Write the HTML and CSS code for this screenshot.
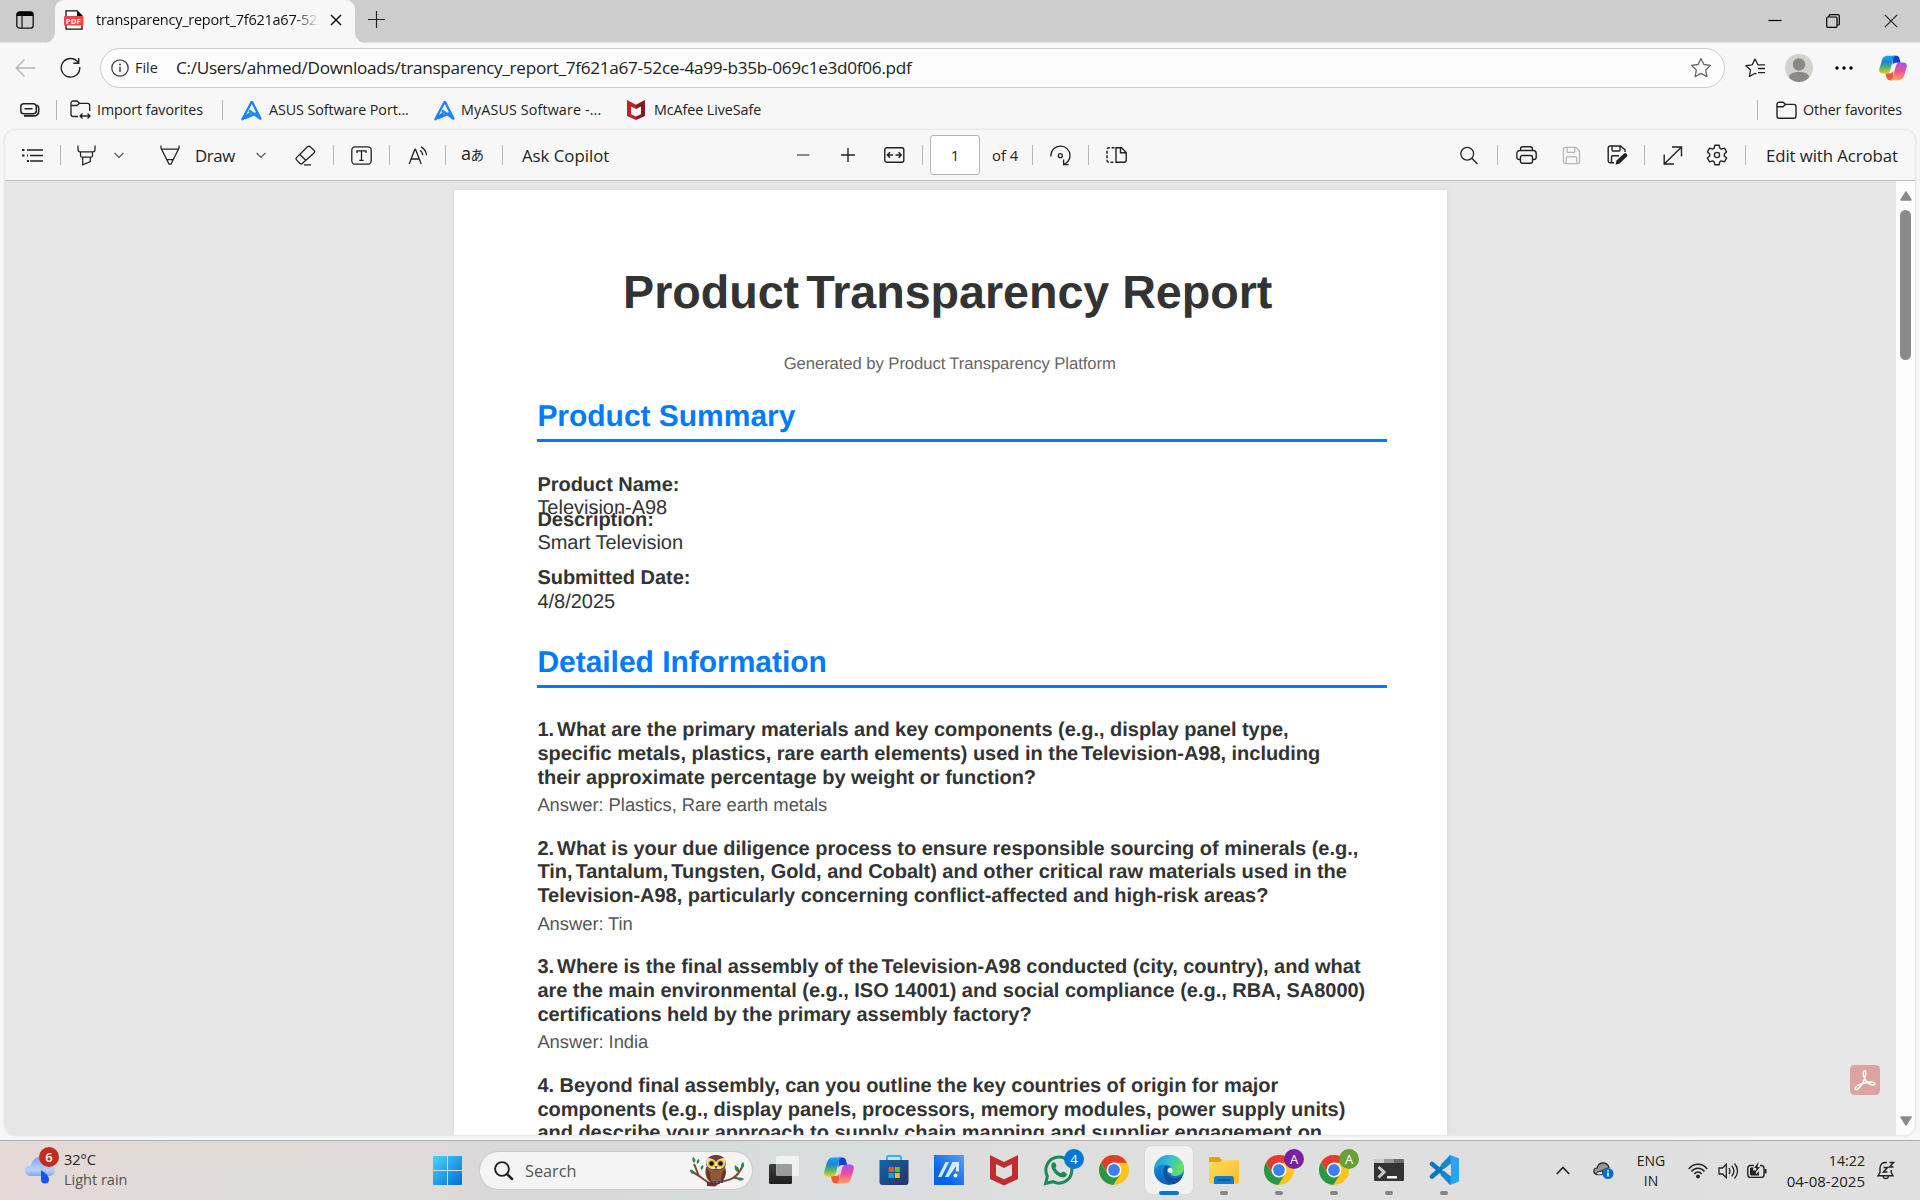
FILE: index.html
```
<!DOCTYPE html>
<html lang="en">
<head>
<meta charset="utf-8">
<title>transparency_report_7f621a67-52ce-4a99-b35b-069c1e3d0f06.pdf</title>
<link rel="stylesheet" href="styles.css">
</head>
<body>
<svg width="0" height="0" class="defs">
  <defs>
    <linearGradient id="cpA" x1="0" y1="0" x2="0" y2="1"><stop offset="0" stop-color="#16a8ee"/><stop offset=".35" stop-color="#1b83d8"/><stop offset=".65" stop-color="#4bb673"/><stop offset="1" stop-color="#f2cb12"/></linearGradient>
    <linearGradient id="cpB" x1="0" y1="0" x2="0" y2="1"><stop offset="0" stop-color="#a551ea"/><stop offset=".5" stop-color="#ee5199"/><stop offset="1" stop-color="#ffa45c"/></linearGradient>
    <linearGradient id="winG" x1="0" y1="0" x2="1" y2="1"><stop offset="0" stop-color="#4bd2fb"/><stop offset="1" stop-color="#0070d0"/></linearGradient>
    <linearGradient id="storeG" x1="0" y1="0" x2="1" y2="1"><stop offset="0" stop-color="#0f67b1"/><stop offset="1" stop-color="#27305e"/></linearGradient>
    <linearGradient id="asG" x1="0" y1="1" x2="1" y2="0"><stop offset=".3" stop-color="#0665e6"/><stop offset="1" stop-color="#57a2fa"/></linearGradient>
    <linearGradient id="edA" x1="0" y1="0" x2="1" y2=".4"><stop offset="0" stop-color="#1794dd"/><stop offset=".5" stop-color="#31bfd0"/><stop offset="1" stop-color="#62e35b"/></linearGradient>
    <linearGradient id="edB" x1="0" y1="0" x2="0" y2="1"><stop offset="0" stop-color="#1a9de4"/><stop offset="1" stop-color="#0b62bc"/></linearGradient>
    <linearGradient id="foG" x1="0" y1="0" x2="1" y2="1"><stop offset="0" stop-color="#ffdc63"/><stop offset="1" stop-color="#fbba24"/></linearGradient>
    <linearGradient id="clG" x1="0" y1="0" x2="0" y2="1"><stop offset="0" stop-color="#7da6ee"/><stop offset=".7" stop-color="#b7d3fb"/><stop offset="1" stop-color="#7ba7f1"/></linearGradient>
    <symbol id="copilot" viewBox="0 0 30 28">
      <path d="M15 1h3.500c2 0 3 1 3.500 3l1.200 4.500H18c-2 0-3 1-3.500 3z" fill="#1740c8"/>
      <path d="M15 27h-3.500c-2 0-3-1-3.500-3L6.800 19.500H12c2 0 3-1 3.500-3z" fill="#ef5a35"/>
      <path d="M9.500 1h9c-2 .3-2.800 1.300-3.400 3.500l-3 11c-.8 3-2 4.500-4.600 4.500H4c-3 0-4.500-2-3.600-5.200l2.800-9.500C4.200 2.400 6 1 9.500 1z" fill="url(#cpA)"/>
      <path d="M20.500 27h-9c2-.3 2.800-1.300 3.400-3.500l3-11c.8-3 2-4.500 4.600-4.500H26c3 0 4.500 2 3.600 5.200l-2.800 9.500c-1 2.900-2.800 4.300-6.300 4.300z" fill="url(#cpB)"/>
    </symbol>
    <symbol id="chrome" viewBox="0 0 30 30">
      <circle cx="15" cy="15" r="15" fill="#fdc41b"/>
      <path d="M2 7.500A15 15 0 0 1 28.100 7.700H15A7.400 7.400 0 0 0 8.300 18z" fill="#e33b2e"/>
      <path d="M2 7.500A15 15 0 0 0 14.300 30L21.200 18.900A7.400 7.400 0 0 1 8.400 18.300z" fill="#279847"/>
      <circle cx="15" cy="15" r="7.400" fill="#fff"/><circle cx="15" cy="15" r="5.900" fill="#3c7ff0"/>
    </symbol>
    <symbol id="asus" viewBox="0 0 20 20">
      <path d="M10.300 1.500 1.300 18.300 9 12.300M10.300 1.500 18.600 17.800 7.600 9.900M3.500 17.500 15 12.500" fill="none" stroke="#1a82ff" stroke-width="2.200" stroke-linejoin="round"/>
    </symbol>
    <symbol id="floppy" viewBox="0 0 20 20">
      <path d="M3.500 1.500h11l4 3.800v11.200a2 2 0 0 1-2 2h-13a2 2 0 0 1-2-2v-13a2 2 0 0 1 2-2zM5.500 1.500v4.200a1 1 0 0 0 1 1h6a1 1 0 0 0 1-1V1.500M4.500 18.500v-6a1 1 0 0 1 1-1h9a1 1 0 0 1 1 1v6" fill="none" stroke="currentColor" stroke-width="1.300"/>
    </symbol>
  </defs>
</svg>

<div class="window">
  <header class="tabstrip">
    <svg class="workspace" width="18" height="18" viewBox="0 0 18 18"><rect x=".8" y=".8" width="16.400" height="16.400" rx="2.800" fill="none" stroke="#111" stroke-width="1.300"/><path d="M.8 5V3.500A3 3 0 0 1 3.500.8h11a3 3 0 0 1 2.700 2.700V5z" fill="#000"/><path d="M6 5v12" stroke="#111" stroke-width="1.200"/></svg>
    <div class="tab">
      <svg width="20" height="20" viewBox="0 0 20 20"><path d="M2 .8h11l5 5v13.400H2z" fill="#fff" stroke="#111" stroke-width="1.300"/><path d="M13 1v5h5z" fill="#111"/><rect x="0" y="6" width="19.500" height="9.500" rx="1" fill="#fb4346"/><text x="1.800" y="13.500" class="pdf-tag">PDF</text></svg>
      <span class="tab-title">transparency_report_7f621a67-52ce</span>
      <svg width="12" height="12" viewBox="0 0 12 12"><path d="M1 1l10 10M11 1 1 11" stroke="#111" stroke-width="1.500"/></svg>
    </div>
    <svg class="newtab" width="19" height="19" viewBox="0 0 19 19"><path d="M9.500 1v17M1 9.500h17" stroke="#222" stroke-width="1.200"/></svg>
    <div class="captions">
      <svg width="14" height="14" viewBox="0 0 14 14"><path d="M.5 6.500h13" stroke="#000" stroke-width="1.200"/></svg>
      <svg width="14" height="14" viewBox="0 0 14 14"><rect x=".7" y="3" width="10.300" height="10.300" rx="1" fill="none" stroke="#000" stroke-width="1.200"/><path d="M3 3V2A1.300 1.300 0 0 1 4.300.7H12A1.300 1.300 0 0 1 13.300 2v8.300A1 1 0 0 1 12.300 11H11" fill="none" stroke="#000" stroke-width="1.200"/></svg>
      <svg width="14" height="14" viewBox="0 0 14 14"><path d="M.8.8l12.400 12.400M13.200.8.8 13.200" stroke="#222" stroke-width="1.200"/></svg>
    </div>
  </header>

  <div class="address-row">
    <svg width="21" height="20" viewBox="0 0 21 20"><path d="M9.500 1.500 1.200 10l8.300 8.500M1.200 10h19" fill="none" stroke="#b4b4b4" stroke-width="1.300"/></svg>
    <svg class="reload" width="21" height="21" viewBox="0 0 21 21"><path d="M18.200 5.500A9.300 9.300 0 1 0 19.800 10M18.700 1v5.200h-5.400" fill="none" stroke="#222" stroke-width="1.400"/></svg>
    <div class="omnibox">
      <svg width="18" height="18" viewBox="0 0 18 18"><circle cx="9" cy="9" r="8.200" fill="none" stroke="#444" stroke-width="1.300"/><path d="M9 7.800V13" stroke="#444" stroke-width="1.500"/><circle cx="9" cy="5.500" r="1" fill="#444"/></svg>
      <span class="scheme">File</span>
      <span class="url">C:/Users/ahmed/Downloads/transparency_report_7f621a67-52ce-4a99-b35b-069c1e3d0f06.pdf</span>
      <svg width="22" height="22" viewBox="0 0 22 22"><path d="M11 1.500l2.900 6 6.600.9-4.800 4.600 1.200 6.600-5.900-3.200-5.900 3.200L6.300 13 1.500 8.400l6.600-.9z" fill="none" stroke="#666" stroke-width="1.300" stroke-linejoin="round"/></svg>
    </div>
    <div class="row-actions">
      <svg width="21" height="21" viewBox="0 0 21 21"><path d="M11.500 16 10 15.300l-5.600 3.200 1.100-6.500L.9 7.700l6.300-.9L10 1l2.900 5.800h7M13 10.500h7M13 14.700h7" fill="none" stroke="#222" stroke-width="1.300" stroke-linejoin="round"/></svg>
      <svg width="28" height="28" viewBox="0 0 28 28"><circle cx="14" cy="14" r="14" fill="#d3d1ce"/><circle cx="14" cy="10.500" r="6.200" fill="#8b8885"/><path d="M4 23.500c0-4 4.500-5.500 10-5.500s10 1.500 10 5.500A14 14 0 0 1 14 28 14 14 0 0 1 4 23.500z" fill="#8b8885"/></svg>
      <svg width="18" height="4" viewBox="0 0 18 4"><circle cx="2" cy="2" r="1.700"/><circle cx="9" cy="2" r="1.700"/><circle cx="16" cy="2" r="1.700"/></svg>
      <svg width="28" height="28"><use href="#copilot"/></svg>
    </div>
  </div>

  <nav class="favorites">
    <svg width="20" height="14" viewBox="0 0 20 14"><rect x=".8" y=".8" width="15.500" height="10" rx="3" fill="none" stroke="#222" stroke-width="1.500"/><path d="M4.500 5.700h8M4 12.900h9.500c3.500 0 5.200-1.600 5.200-5V5c0-1.300-.5-2-1.500-2.800" fill="none" stroke="#222" stroke-width="1.600"/></svg>
    <i class="sep"></i>
    <svg width="21" height="20" viewBox="0 0 21 20"><path d="M8 16.500H3.200A2.200 2.200 0 0 1 1 14.300V3.200A2.200 2.200 0 0 1 3.200 1H7l2.500 2.300h8A2.200 2.200 0 0 1 19.700 5.500V11M1 5.500h6l2.500-2.200M10.500 16h9M12.500 13.500 10 16l2.500 2.500M17.500 13.500 20 16l-2.500 2.500" fill="none" stroke="#222" stroke-width="1.300"/></svg>
    <span class="l1">Import favorites</span>
    <i class="sep"></i>
    <svg width="21" height="21"><use href="#asus"/></svg>
    <span>ASUS Software Port...</span>
    <svg width="21" height="21"><use href="#asus"/></svg>
    <span class="l2">MyASUS Software -...</span>
    <svg width="18" height="20" viewBox="0 0 18 20"><path d="M0 0l9 4.800V9L4 6.500v7.700l5 2.300V20l-9-4z" fill="#c4202b"/><path d="M18 0 9 4.800V9l5-2.500v7.700l-5 2.300V20l9-4z" fill="#83191d"/></svg>
    <span>McAfee LiveSafe</span>
    <i class="sep"></i>
    <svg width="21" height="19" viewBox="0 0 21 19"><path d="M3.200 1.200H7l2.500 2.200h8.300A2.200 2.200 0 0 1 20 5.600v9.500a2.200 2.200 0 0 1-2.200 2.200H3.200A2.200 2.200 0 0 1 1 15.100V3.400a2.200 2.200 0 0 1 2.200-2.200zM1 5.700h6l2.500-2.300" fill="none" stroke="#222" stroke-width="1.400"/></svg>
    <span class="l3">Other favorites</span>
  </nav>

  <main class="viewer">
    <div class="toolbar">
      <svg width="21" height="15" viewBox="0 0 21 15"><path d="M5 2h16M8 7.500h13M8 13h13" stroke="#222" stroke-width="1.400"/><path d="M0 2h2.500M0 7.500h2.500M5 7.500h1M5 13h2" stroke="#222" stroke-width="2"/></svg>
      <i class="sep"></i>
      <svg width="19" height="21" viewBox="0 0 19 21"><path d="M1 .5v4c0 1.500.8 2.300 2 2.300h13c1.200 0 2-.8 2-2.300v-4M3.500 7.200v3.500c0 1 .7 1.500 1.500 1.500h9c.8 0 1.500-.5 1.500-1.500V7.200M5.700 12.500v7.300l7.600-3.300v-4" fill="none" stroke="#222" stroke-width="1.250"/></svg>
      <svg width="10" height="7" viewBox="0 0 10 7"><path d="M.6 1 5 5.500 9.400 1" fill="none" stroke="#555" stroke-width="1.200"/></svg>
      <svg width="20" height="20" viewBox="0 0 20 20"><path d="M1 .5V3l8 16h2l8-16V.5M1.200 4h17.600M7 14.500h6" fill="none" stroke="#222" stroke-width="1.250"/></svg>
      <span class="draw">Draw</span>
      <svg width="10" height="7" viewBox="0 0 10 7"><path d="M.6 1 5 5.500 9.400 1" fill="none" stroke="#555" stroke-width="1.200"/></svg>
      <svg width="21" height="21" viewBox="0 0 21 21"><path d="M12.500 1.800 1.500 12.600c-.8.800-.8 1.500 0 2.300l3.500 3.600c.8.800 1.500.8 2.300 0L19.200 7.800c.8-.8.800-1.500 0-2.300l-4-3.700c-.9-.8-1.800-.8-2.700 0zM4.800 9.500l6.500 6.300M9 19.800h7" fill="none" stroke="#222" stroke-width="1.300"/></svg>
      <i class="sep"></i>
      <svg width="21" height="19" viewBox="0 0 21 19"><rect x=".8" y=".8" width="19.400" height="17.400" rx="3.500" fill="none" stroke="#222" stroke-width="1.300"/><path d="M6 7V4.800h9V7M10.500 4.800v9.600M8.300 14.400h4.400" fill="none" stroke="#222" stroke-width="1.300"/></svg>
      <i class="sep"></i>
      <svg width="21" height="19" viewBox="0 0 21 19"><path d="M1.200 18 6.800 3.500h.8L13.200 18M3.200 13h8" fill="none" stroke="#222" stroke-width="1.300"/><path d="M12 4.200c1.700 1 2.600 2.500 2.700 5M13 .8c3.300 1.700 5.200 4.500 5.500 8.400" fill="none" stroke="#222" stroke-width="1.300"/></svg>
      <i class="sep"></i>
      <span class="aa">a<small>あ</small></span>
      <i class="sep"></i>
      <span>Ask Copilot</span>
      <svg width="14" height="14" viewBox="0 0 14 14"><path d="M1 7h12.500" stroke="#666" stroke-width="1.600"/></svg>
      <svg width="14" height="14" viewBox="0 0 14 14"><path d="M0 7h14M7 0v14" stroke="#222" stroke-width="1.400"/></svg>
      <svg width="21" height="16" viewBox="0 0 21 16"><rect x=".8" y=".8" width="19" height="14.400" rx="2" fill="none" stroke="#222" stroke-width="1.400"/><path d="M3.500 8H9M6 5.300 3.400 8 6 10.700M11.600 8h5.500M14.600 5.300 17.200 8l-2.600 2.700" fill="none" stroke="#222" stroke-width="1.500"/></svg>
      <i class="sep"></i>
      <b class="pageno">1</b>
      <span class="of">of 4</span>
      <i class="sep"></i>
      <svg width="21" height="21" viewBox="0 0 21 21"><path d="M.8 11.500C.8 5 5 1.200 10.500 1.200s9.500 4 9.500 9.300c0 4-2 7-6.500 9.300M13.600 14.500v5.200h5" fill="none" stroke="#222" stroke-width="1.300"/><circle cx="10.300" cy="10.700" r="2" fill="none" stroke="#222" stroke-width="1.300"/></svg>
      <i class="sep"></i>
      <svg width="21" height="16" viewBox="0 0 21 16"><path d="M10 .8h5.500l4.700 4.700v7.700a2 2 0 0 1-2 2H10zM14.500.8v5h5.500" fill="none" stroke="#222" stroke-width="1.400"/><path d="M8.500.8H3a2 2 0 0 0-2 2v10.400a2 2 0 0 0 2 2h5.500" fill="none" stroke="#222" stroke-width="1.500" stroke-dasharray="3 1.600"/></svg>
      <svg width="18" height="19" viewBox="0 0 18 19"><circle cx="7.200" cy="7.700" r="6.400" fill="none" stroke="#222" stroke-width="1.300"/><path d="M11.800 12.300l5.700 5.700" stroke="#222" stroke-width="1.400"/></svg>
      <i class="sep"></i>
      <svg width="21" height="18" viewBox="0 0 21 18"><path d="M4.500 13.500H3A2.200 2.200 0 0 1 .8 11.300V7.500A3 3 0 0 1 3.800 4.500h13.400a3 3 0 0 1 3 3v3.800a2.200 2.200 0 0 1-2.200 2.200h-1.500M4.500 4.500V3A2.200 2.200 0 0 1 6.700.8h7.600A2.200 2.200 0 0 1 16.500 3v1.500M6.200 9.500h8.600a1.700 1.700 0 0 1 1.700 1.700v4.300a1.700 1.700 0 0 1-1.700 1.700H6.200a1.700 1.700 0 0 1-1.700-1.700v-4.300a1.700 1.700 0 0 1 1.700-1.700z" fill="none" stroke="#222" stroke-width="1.400"/></svg>
      <svg class="off" width="19" height="19"><use href="#floppy"/></svg>
      <svg width="21" height="20" viewBox="0 0 21 20"><path d="M7 17.800H3.200a2 2 0 0 1-2-2V3a2 2 0 0 1 2-2H13.500l4.500 3.800V7M5 1v4a1 1 0 0 0 1 1h6a1 1 0 0 0 1-1V1M4.500 17.800v-6a1 1 0 0 1 1-1H12" fill="none" stroke="#222" stroke-width="1.400"/><path d="M8.500 19.800l1-4.300 7.300-6.800c2-1.600 4.600.8 3 2.900l-7 7z" fill="#222"/></svg>
      <i class="sep"></i>
      <svg width="20" height="19" viewBox="0 0 20 19"><path d="M9 1h9.500v9.500M18.500 1 1.500 17.800M1.200 8.500V18H11" fill="none" stroke="#222" stroke-width="1.400"/></svg>
      <svg width="22" height="22" viewBox="0 0 22 22"><path d="M8.900 1.200h4.200l.7 3 1.600.9 3-.9 2.200 3.700-2.300 2.100v2l2.300 2.100-2.200 3.700-3-.9-1.600.9-.7 3H8.900l-.7-3-1.600-.9-3 .9-2.200-3.700L3.700 12v-2L1.400 7.900l2.200-3.700 3 .9 1.600-.9z" fill="none" stroke="#222" stroke-width="1.400" stroke-linejoin="round"/><circle cx="11" cy="11" r="2.600" fill="none" stroke="#222" stroke-width="1.300"/></svg>
      <i class="sep"></i>
      <span class="acro">Edit with Acrobat</span>
    </div>

    <div class="document">
      <article class="page">
        <h1>Product<span class="k"> </span>Transparency Report</h1>
        <p class="by">Generated by Product<span class="k2"> </span>Transparency Platform</p>
        <h2>Product Summary</h2>
        <dl>
          <dt>Product Name:</dt><dd>Television-A98</dd>
          <dt class="over">Description:</dt><dd>Smart<span class="k2"> </span>Television</dd>
          <dt class="date">Submitted Date:</dt><dd>4/8/2025</dd>
        </dl>
        <h2>Detailed Information</h2>
        <section><h3>1.<span class="k"> </span>What are the primary materials and key components (e.g., display panel type,<br>specific metals, plastics, rare earth elements) used in the<span class="k"> </span>Television-A98, including<br>their approximate percentage by weight or function?</h3>
        <p>Answer: Plastics, Rare earth metals</p></section>
        <section><h3>2.<span class="k"> </span>What is your due diligence process to ensure responsible sourcing of minerals (e.g.,<br>Tin,<span class="k"> </span>Tantalum,<span class="k"> </span>Tungsten, Gold, and Cobalt) and other critical raw materials used in the<br>Television-A98, particularly concerning conflict-affected and high-risk areas?</h3>
        <p>Answer:<span class="k2"> </span>Tin</p></section>
        <section><h3>3.<span class="k"> </span>Where is the final assembly of the<span class="k"> </span>Television-A98 conducted (city, country), and what<br>are the main environmental (e.g., ISO 14001) and social compliance (e.g., RBA, SA8000)<br>certifications held by the primary assembly factory?</h3>
        <p>Answer: India</p></section>
        <section><h3>4. Beyond final assembly, can you outline the key countries of origin for major<br>components (e.g., display panels, processors, memory modules, power supply units)<br>and describe your approach to supply chain mapping and supplier engagement on</h3></section>
      </article>
      <div class="scrollbar">
        <svg width="12" height="10" viewBox="0 0 12 10"><path d="M6 1 11 9H1z" fill="#8a8a8a" stroke="#8a8a8a" stroke-width="1.500" stroke-linejoin="round"/></svg>
        <i class="thumb"></i>
        <svg width="12" height="10" viewBox="0 0 12 10"><path d="M6 9 11 1H1z" fill="#8a8a8a" stroke="#8a8a8a" stroke-width="1.500" stroke-linejoin="round"/></svg>
      </div>
      <svg class="acrobat" width="30" height="30" viewBox="0 0 30 30"><rect width="30" height="30" rx="4.500" fill="#dba4a1"/><path d="M14 6c1.800-1.300 2.300 1.500 1.500 4.500-1 4-3.500 9.500-6.500 12.500-2 2.300-4.500 2-3.800.2.800-2.300 5-4.200 9.500-5.200 4-1 8.500-1.200 10 .2 1.200 1.500-1.500 2.500-4.700 1C16.500 17.500 13.700 13 13.300 9.500 13.100 7.500 13.300 6.500 14 6z" fill="none" stroke="#fff" stroke-width="1.500"/></svg>
    </div>
  </main>
</div>

<footer class="taskbar">
  <div class="weather">
    <div class="cloud">
      <svg width="30" height="27" viewBox="0 0 30 27"><path d="M6 8.500C7 3 10.500 0 15 0s8 3 8.500 8c4 0 6.500 2.300 6.500 5.500S27.500 19 24 19H6.500C2.800 19 0 16.800 0 13.500S2.500 8.700 6 8.500z" fill="url(#clG)"/><path d="M16 13c4.500 3 8 6 8 9.500a4 4 0 0 1-8 0z" fill="#1555ee"/></svg>
      <span class="badge red">6</span>
    </div>
    <div class="stack"><span>32°C</span><span class="dim">Light rain</span></div>
  </div>
  <svg class="start" width="29" height="29" viewBox="0 0 29 29"><path d="M1 0h13v14H0V1a1 1 0 0 1 1-1zM15 0h13a1 1 0 0 1 1 1v13H15zM0 15h14v14H1a1 1 0 0 1-1-1zM15 15h14v13a1 1 0 0 1-1 1H15z" fill="url(#winG)"/></svg>
  <div class="search">
    <svg width="19" height="19" viewBox="0 0 19 19"><circle cx="8" cy="8" r="6.900" fill="none" stroke="#222" stroke-width="1.900"/><path d="M13 13l5 5" stroke="#222" stroke-width="2.500" stroke-linecap="round"/></svg>
    <span>Search</span>
    <svg width="56" height="32" viewBox="0 0 56 32"><path d="M18 29c8-1.500 20-2 26-6 4-2.500 7-6 10-13M20 28C14 24 8 19 2 16M10 21c-2-4-3-8-5-12M43 23c3-1 5 0 8 1M50 18l-2-6" fill="none" stroke="#7b4a3a" stroke-width="2"/><path d="M18 31v-4l16-1-8 5.500z" fill="#6c3524"/><path d="M17 12h19c2 8-1 14-5 16h-8c-5-2-8-8-6-16z" fill="#91593b"/><path d="M18 13c-2 5 0 11 4 14 0-5-1-10-4-14zM36 13c2 5 0 11-4 14 0-5 1-10 4-14z" fill="#663624"/><path d="M17 8C18 2 22 0 27 0s9 2 10 8c0 5-4 7-10 7s-10-2-10-7z" fill="#6e4036"/><path d="M18 3c4 0 7 1 9 4 2-3 5-4 9-4 2 6-1 10-5 11h-8c-5-1-7-6-5-11z" fill="#f2dcb0"/><circle cx="22.500" cy="8.500" r="3.600" fill="#e5bd12"/><circle cx="31.500" cy="8.500" r="3.600" fill="#e5bd12"/><circle cx="22.500" cy="8.500" r="2.300" fill="#111"/><circle cx="31.500" cy="8.500" r="2.300" fill="#111"/><path d="M25.500 11h3L27 14.500z" fill="#574234"/><path d="M23 26v4M26 26v3M30 26v3M33 25v3" stroke="#3b338b" stroke-width="1.700"/><path d="M4 2c3 2 3 4 1 6-2-2-2-4-1-6zM8 9c-1-3 0-4 2-5 1 2 0 4-2 5zM1 15c3-1 4 1 4 4-3 0-4-2-4-4zM12 15c-1-3 0-4 2-5 1 2 0 4-2 5zM54 7c2 3 1 5-1 7-2-3-1-5 1-7zM46 10c3 2 3 4 2 7-2-2-3-4-2-7zM48 24c2-2 4-2 7 0-2 2-5 2-7 0z" fill="#2d8a46"/></svg>
  </div>
  <div class="apps">
    <div class="app"><svg width="30" height="30" viewBox="0 0 30 30"><defs><linearGradient id="tvG" x1="0" y1="0" x2="0" y2="1"><stop offset="0" stop-color="#3c3c3c"/><stop offset="1" stop-color="#1f1f1f"/></linearGradient></defs><rect x="0" y="9" width="23" height="20" rx="1.500" fill="url(#tvG)"/><rect x="7" y="1" width="23" height="20" rx="1.500" fill="#fff" opacity=".62"/><path d="M7.500 9H23v12H7.500z" fill="#888" opacity=".55"/></svg></div>
    <div class="app"><svg width="30" height="29"><use href="#copilot"/></svg></div>
    <div class="app"><svg width="30" height="30" viewBox="0 0 30 30"><path d="M8 6V2.500A1.500 1.500 0 0 1 9.500 1h11A1.500 1.500 0 0 1 22 2.500V6" fill="none" stroke="#27b9f0" stroke-width="1.900"/><path d="M.5 5h29v22a3 3 0 0 1-3 3h-23a3 3 0 0 1-3-3z" fill="url(#storeG)"/><path d="M9.500 12H15v5H9.500z" fill="#f25022"/><path d="M15.800 12h5v5h-5z" fill="#7fba00"/><path d="M9.500 18H15v5H9.500z" fill="#00a4ef"/><path d="M15.800 18h5v5h-5z" fill="#ffb900"/></svg></div>
    <div class="app"><svg width="30" height="30" viewBox="0 0 30 30"><path d="M0 0h30v30H0z" fill="url(#asG)"/><path d="M4 22 11.500 7h3.500L7.500 22zM11 22l7.500-15h6.500v9.500h-3v-5.500L14.500 22z" fill="#dceaff"/><circle cx="21.500" cy="20.500" r="1.900" fill="#fff"/></svg></div>
    <div class="app"><svg width="28" height="30" viewBox="0 0 28 30"><path d="M0 0l14 7L28 0v24l-14 6.500L0 24zM6 9v11.500l8 3.700 8-3.700V9l-8 4z" fill="#bf2d2e" fill-rule="evenodd"/></svg></div>
    <div class="app"><svg width="30" height="30" viewBox="0 0 30 30"><path d="M1.600 28.500l1.800-7.300A13 13 0 1 1 9 26.700z" fill="none" stroke="#1c8a58" stroke-width="3"/><path d="M8 8.500C9.500 6.500 11 7 12 9.500c.7 1.500 0 2.500-.8 3.500 1.600 2.800 3.500 4.300 6 5.300 1-1.200 1.500-2 3-1.300 3.500 1.500 3 3 1.500 4.500-2 2-6 1-9.500-2S6 11 8 8.500z" fill="#1c8a58"/></svg><span class="badge blue">4</span></div>
    <div class="app"><svg width="30" height="30"><use href="#chrome"/></svg></div>
    <div class="app active"><svg width="30" height="30" viewBox="0 0 30 30"><circle cx="15" cy="15" r="15" fill="url(#edB)"/><path d="M.5 12C2 5 8 0 15 0c9 0 15 6 15 13 0 5-4 8-9 8-3 0-5-1-3.500-3C20 14 17 9.500 11 9.500 6 9.500 2 11 .5 16z" fill="url(#edA)"/><path d="M11 11c-4 8 1 18 9 18.200 4-1.500 6.700-4 8-6.700.5-1-.3-1.200-1-.8-7 3.500-14-.2-14-5.700 0-2 .5-3.200 2-4.500-1.500-.9-3-1-4-.5z" fill="#124f9e"/><path d="M17.800 18.200c-2.300-.2-3.900-1-4.300-2.500 0-1.900 1.200-3 2.700-3 2.300 0 3.200 2.700 1.600 5.500z" fill="#eef6f8"/><path d="M28.800 20.900c-1 3.600-3.700 6.500-7.300 7.800 3.500.2 6.500-2 8.500-5.700z" fill="#f1f1f1"/></svg><i class="run"></i></div>
    <div class="app"><svg width="30" height="27" viewBox="0 0 30 27"><path d="M0 1.500A1.500 1.500 0 0 1 1.500 0H10l3 3-2 4H0z" fill="#e2a30f"/><path d="M0 5h11l2-1.700h17v23.200H0z" fill="url(#foG)"/><path d="M5 27v-5.500A2.500 2.500 0 0 1 7.500 19h15a2.500 2.500 0 0 1 2.500 2.500V27z" fill="#117dd1"/><path d="M9 23h12" stroke="#0a4f91" stroke-width="1.300" stroke-linecap="round"/></svg><i class="run"></i></div>
    <div class="app"><svg width="30" height="30"><use href="#chrome"/></svg><span class="badge purple">A</span><i class="run"></i></div>
    <div class="app"><svg width="30" height="30"><use href="#chrome"/></svg><span class="badge green">A</span><i class="run"></i></div>
    <div class="app"><svg width="30" height="22" viewBox="0 0 30 22"><rect width="30" height="22" rx="1.500" fill="#333"/><path d="M0 4V1.500A1.500 1.500 0 0 1 1.500 0H10v4z" fill="#ccc"/><path d="M10 0h10v4H10z" fill="#999"/><path d="M20 0h8.500A1.500 1.500 0 0 1 30 1.500V4H20z" fill="#6b6b6b"/><path d="M4.500 8l5.500 5-5.500 5.500" fill="none" stroke="#ccc" stroke-width="3"/><path d="M13 18.300h10" stroke="#fff" stroke-width="2.400"/></svg><i class="run"></i></div>
    <div class="app"><svg width="30" height="30" viewBox="0 0 30 30"><path d="M22 5.500 3 21.500M3 9l19 15.500" stroke="#0878c2" stroke-width="4.700" stroke-linecap="round"/><path d="M21.500 0 30 3.500v23L21.500 30l-1.500-1V1z" fill="#2ba4ef"/><path d="M22 8v14l-9-7z" fill="#dddee0"/><path d="M21 0 11.500 10 15 14l7-5.500zM21 30l-9.500-10L15 16l7 5.500z" fill="#1288d3"/></svg><i class="run"></i></div>
  </div>
  <div class="tray">
    <svg width="14" height="9" viewBox="0 0 14 9"><path d="M.8 8 7 1.500 13.200 8" fill="none" stroke="#222" stroke-width="1.600"/></svg>
    <svg width="21" height="17" viewBox="0 0 21 17"><path d="M3.500 12.500C1.700 12 .8 11 .8 9.300c0-2 1.300-3.300 3.400-3.500C5 2.500 7.300 1 10 1c3 0 5 1.500 6 4.500L9 8.500z" fill="#999" stroke="#333" stroke-width="1.300"/><path d="M3.500 12.500c2 .5 4 .3 6 0V9L4 10z" fill="#ddd" stroke="#333" stroke-width="1"/><circle cx="15" cy="11.500" r="5.500" fill="#0b6cca"/><path d="M15 10.500v4M15 7.900v1.500" stroke="#fff" stroke-width="1.500"/></svg>
    <div class="lang"><span>ENG</span><span>IN</span></div>
    <svg width="20" height="16" viewBox="0 0 20 16"><path d="M.8 6C5.500-.2 14.500-.2 19.200 6M3.500 8.500c3.300-4.300 9.700-4.300 13 0M6.300 11c2-2.600 5.400-2.600 7.400 0" fill="none" stroke="#222" stroke-width="1.500"/><circle cx="10" cy="13.500" r="1.900" fill="#222"/></svg>
    <svg width="21" height="18" viewBox="0 0 21 18"><path d="M1 6h3.500L8.300 2.200v13.600L4.500 12H1zM11 6c1.300 2 1.300 4 0 6M13.700 3.700c2.800 3.300 2.800 7.300 0 10.600M16.500 1.500c4 4.500 4 10.500 0 15" fill="none" stroke="#222" stroke-width="1.300"/></svg>
    <svg width="20" height="17" viewBox="0 0 20 17"><path d="M7 3.500H3.500A2.700 2.700 0 0 0 .8 6.200v6.500a2.700 2.700 0 0 0 2.700 2.700h10.800A2.700 2.700 0 0 0 17 12.700V6.200a2.700 2.700 0 0 0-2.700-2.700H13" fill="none" stroke="#222" stroke-width="1.400"/><path d="M3 7c0-1 .5-1.500 1.500-1.500h2L6 8.500h3v4L12 9v4.500H4.500c-1 0-1.500-.5-1.500-1.500z" fill="#222"/><path d="M11.500 0 7 6h2.500L8.500 10.500 13 5h-2.500z" fill="#222"/><path d="M18.500 7v4.500" stroke="#222" stroke-width="2"/></svg>
    <div class="clock"><span class="time">14:22</span><span>04-08-2025</span></div>
    <svg width="18" height="19" viewBox="0 0 18 19"><path d="M10 1.500C5.500 1 3 3.500 3 7v4.500L1 14.800h15l-1.800-3.500V9M6 15c.5 3.500 5 3.500 5.500 0" fill="none" stroke="#222" stroke-width="1.400"/><path d="M6.500 6.500h4l-4 4.500h4M12.500 1.500h4l-4 4.500h4" fill="none" stroke="#222" stroke-width="1.500"/></svg>
  </div>
</footer>
</body>
</html>
```
FILE: styles.css
```
* { box-sizing: border-box; margin: 0; padding: 0; }
body {
  width: 1920px; height: 1200px; overflow: hidden;
  display: flex; flex-direction: column;
  font-family: "Open Sans", "Noto Sans", sans-serif;
  font-size: 14.4px; color: #222; background: #f7f7f7;
}
svg { display: block; flex: none; overflow: visible; }
.defs { position: absolute; }
span { white-space: nowrap; }

.window { height: 1140px; display: flex; flex-direction: column; }

/* tab strip */
.tabstrip { height: 43px; display: flex; background: #cdcdcd; border-bottom: 1px solid #e2e2e2; }
.workspace { margin: 11px 0 0 16px; }
.tab {
  position: relative; width: 300px; height: 43px; margin-left: 21px; padding-left: 9px;
  display: flex; align-items: center; background: #f7f7f7; border-radius: 9px 9px 0 0;
}
.tab::before, .tab::after { content: ""; position: absolute; bottom: 0; width: 10px; height: 10px; }
.tab::before { left: -10px; background: radial-gradient(circle at 0 0, #cdcdcd 9.500px, #f7f7f7 10px); }
.tab::after { right: -10px; background: radial-gradient(circle at 100% 0, #cdcdcd 9.500px, #f7f7f7 10px); }
.tab svg { margin-bottom: 3px; }
.pdf-tag { font: bold 7.800px "Open Sans", sans-serif; fill: #fff; }
.tab-title {
  width: 224px; margin: 0 10px 4px 12px; overflow: hidden;
  font-size: 14.5px; letter-spacing: -.24px; color: #111;
  -webkit-mask-image: linear-gradient(90deg, #000 200px, transparent 223px);
  mask-image: linear-gradient(90deg, #000 200px, transparent 223px);
}
.newtab { margin: 10px 0 0 12px; }
.captions { margin: 14px 22px 0 auto; display: flex; gap: 44px; }

/* address row */
.address-row { height: 50px; padding: 5px 13px 5px 15px; display: flex; align-items: center; }
.address-row > svg { margin-bottom: 1px; }
.reload { margin-left: 24px; }
.omnibox {
  width: 1625px; height: 40px; margin-left: 19px; padding: 0 12px 0 10px;
  display: flex; align-items: center;
  background: #fdfdfd; border: 1px solid #cdcdcd; border-radius: 20px;
}
.scheme { margin: 0 18px 1px 6px; width: 23px; }
.url { margin-bottom: 1px; font-size: 17.2px; letter-spacing: -.3px; }
.omnibox svg:last-child { margin-left: auto; }
.row-actions { flex: 1; margin-left: 20px; display: grid; align-items: center; grid-template-columns: 40px 50px 44px auto; }

/* favorites bar */
.favorites {
  height: 36px; padding: 0 0 2px 20px; display: grid; align-items: center; justify-items: start;
  grid-template-columns: 36px 14px 27px 125px 19px 28px 165px 27px 166px 27px 1103px 19px 27px auto;
  font-size: 14.3px; letter-spacing: -.07px;
}
.favorites span { margin-bottom: 2px; }
.l1 { letter-spacing: -.07px; }
.l2 { letter-spacing: .13px; }
.l3 { letter-spacing: -.1px; }
.sep { width: 1px; height: 20px; background: #b5b5b5; }

/* pdf viewer */
.viewer {
  flex: 1; margin: 0 4px 4px; display: flex; flex-direction: column; overflow: hidden;
  border: 1px solid #e8e8e8; border-radius: 12px; box-shadow: 0 0 2px #ddd;
}
.toolbar {
  height: 51px; padding-left: 17px; display: grid; align-items: center; justify-items: start;
  grid-template-columns: 38px 17px 37px 46px 35px 61px 39px 38px 18px 38px 19px 37px 16px 41px 20px 274px 45px 43px 38px 8px 62px 40px 18px 38px 18px 354px 37px 19px 46px 45px 37px 19px 43px 39px 21px auto;
  font-size: 16.8px; border-bottom: 1px solid #bbb;
}
.draw { letter-spacing: -.35px; }
.acro { letter-spacing: -.08px; }
.of { font-size: 14.8px; }
.aa { display: flex; align-items: baseline; font-size: 18px; line-height: 20px; margin-bottom: 3px; }
.aa small { font-family: "Noto Sans CJK JP", sans-serif; font-size: 13.5px; margin-left: -.5px; }
.pageno {
  width: 50px; height: 40px; display: grid; place-items: center;
  font-size: 15px; font-weight: 400; background: #fff; border: 1px solid #b5b5b5; border-radius: 3px;
}
.off { color: #b5b5b5; }
.document { position: relative; flex: 1; min-height: 0; display: flex; background: #e6e6e6; }
.page {
  width: 993px; margin: 9px 0 0 449px; padding: 75px 60px 0 83.400px; overflow: hidden;
  background: #fff; color: #333; box-shadow: 0 0 4px #d5d5d5;
  font-family: "Liberation Sans", Arial, sans-serif; text-rendering: geometricPrecision;
}
.k { letter-spacing: -.125em; }
.k2 { letter-spacing: -.04em; }
h1, .by { margin-right: 25px; text-align: center; white-space: nowrap; }
h1 { font-size: 46.7px; line-height: 54px; letter-spacing: -.05px; margin-right: 29px; }
.by { margin-top: 35px; font-size: 16.7px; line-height: 20px; letter-spacing: -.08px; color: #666; }
h2 {
  margin-top: 25px; padding-bottom: 4px; border-bottom: 3px solid #007bff;
  font-size: 30px; line-height: 36px; letter-spacing: -.03px; color: #007bff;
}
dl { margin: 31px 0 31px; font-size: 20px; line-height: 24px; letter-spacing: -.02px; }
dt { font-weight: bold; }
dd { margin-top: -1px; }
.over { margin-top: -12px; }
.date { margin-top: 11px; }
.date + dd { margin-top: 0; }
dl + h2 { margin: 0 0 31px; }
section { margin-bottom: 19.6px; white-space: nowrap; }
h3 { font-size: 20px; line-height: 23.8px; letter-spacing: -.028px; }
section p { margin-top: 3.600px; padding-bottom: 2px; font-size: 18.4px; line-height: 22px; letter-spacing: -.04px; color: #555; }
.scrollbar {
  width: 19px; margin-left: auto; padding: 10px 0 9px; background: #fcfcfc;
  display: flex; flex-direction: column; align-items: center;
}
.thumb { width: 11px; height: 150px; margin: 9px 0 auto; border-radius: 6px; background: #8a8a8a; }
.acrobat { position: absolute; right: 35px; bottom: 40px; }

/* taskbar */
.taskbar {
  height: 60px; display: flex; align-items: flex-start; border-top: 1px solid #b0b0b0;
  background: linear-gradient(90deg, #e5d9d8, #dedad8 12%, #dedad9 22%, #d8d9d9 27%, #d8dcdd 42%, #dedede 55%, #e0e0e0);
}
.weather { width: 433px; padding: 9px 0 0 25px; display: flex; gap: 9px; }
.cloud { position: relative; padding-top: 7px; }
.stack { display: flex; flex-direction: column; line-height: 20px; font-size: 14.5px; }
.dim { color: #555; }
.badge {
  position: absolute; width: 20px; height: 20px; border-radius: 50%;
  display: grid; place-items: center; line-height: 20px; font-size: 13px; color: #fff;
}
.cloud .badge { left: 14px; top: -3px; font-weight: 600; }
.app .badge { right: 2px; top: 8px; }
.red { background: #c42b1c; }
.blue { background: #0078d4; }
.purple { background: #7a1fa2; }
.green { background: #689f38; }
.start { margin-top: 15px; }
.search {
  width: 274px; height: 39px; margin: 10px 0 0 17px; padding: 0 7px 0 14px;
  display: flex; align-items: center; font-size: 16.3px; color: #555;
  background: #f4f4f4; border: 1px solid #c8c8c8; border-radius: 20px;
}
.search span { margin: 0 auto 0 12px; }
.apps { display: flex; margin-left: 3px; }
.app { position: relative; width: 55px; height: 59px; padding-bottom: 1px; display: flex; align-items: center; justify-content: center; }
.active::before { content: ""; position: absolute; left: 4px; top: 5px; width: 48px; height: 48px; background: #f1f1f1; border-radius: 6px; box-shadow: 0 0 1px #aaa; }
.active svg { position: relative; }
.run { position: absolute; bottom: 5px; left: 23.500px; width: 8px; height: 4px; border-radius: 2px; background: #858585; }
.active .run { left: 18px; width: 20px; background: #0078d4; }
.tray {
  height: 59px; flex: 1; margin-left: 85px; display: grid; align-items: center; justify-items: start;
  grid-template-columns: 37px 43px 52px 30px 29px 39px 91px auto;
}
.lang, .clock { display: flex; flex-direction: column; line-height: 20px; }
.lang { width: 30px; align-items: center; font-size: 14px; }
.clock { width: 79px; align-items: flex-end; font-size: 15px; }
.time { font-size: 14.2px; }
```
